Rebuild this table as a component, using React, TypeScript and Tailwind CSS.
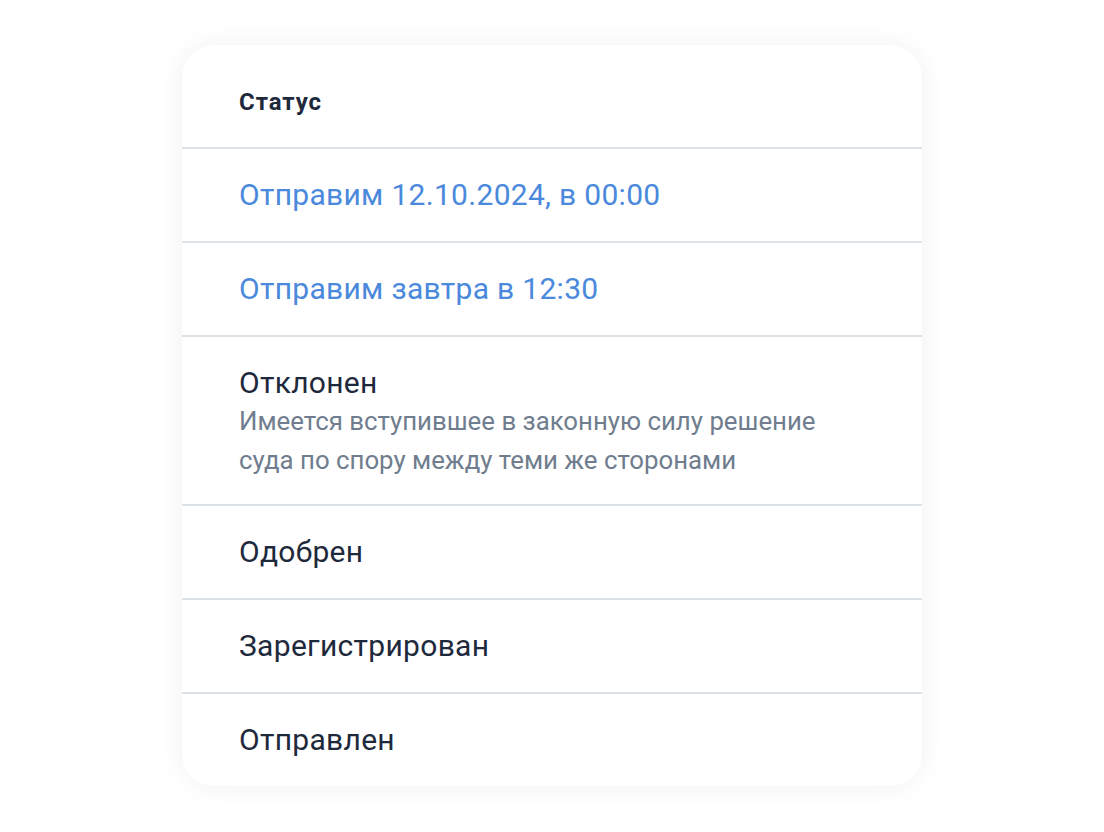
const rows = [
  { title: "Отправим 12.10.2024, в 00:00", tone: "blue" },
  { title: "Отправим завтра в 12:30", tone: "blue" },
  {
    title: "Отклонен",
    tone: "dark",
    note: "Имеется вступившее в законную силу решение суда по спору между теми же сторонами",
  },
  { title: "Одобрен", tone: "dark" },
  { title: "Зарегистрирован", tone: "dark" },
  { title: "Отправлен", tone: "dark" },
];

export default function App() {
  return (
    <main className="min-h-screen w-full bg-white pt-[45px] font-['Roboto',sans-serif]">
      <div className="ml-[182px] w-[740px] overflow-hidden rounded-[32px] bg-white shadow-[0_0_28px_rgba(15,23,42,0.06)]">
        <div className="flex h-[104px] items-center border-b-2 border-[#dde2e7] pl-[57px] pt-[12px]">
          <h2 className="text-[24px] font-bold tracking-[0.04em] text-[#1e293b]">Статус</h2>
        </div>
        {rows.map((row, i) => {
          const last = i === rows.length - 1;
          return (
            <div
              key={row.title}
              className={
                (row.note ? "pt-[27px] pb-[24px] " : last ? "flex h-[92px] items-center " : "flex h-[94px] items-center ") +
                (last ? "" : "border-b-2 border-[#dde2e7] ") +
                "pl-[57px]"
              }
            >
              <div>
                <p className={"text-[30px] leading-[38px] tracking-[0.01em] " + (row.tone === "blue" ? "text-[#4a89dc]" : "text-[#1e293b]")}>
                  {row.title}
                </p>
                {row.note ? (
                  <p className="w-[600px] text-[25.8px] leading-[39px] text-[#6f7d8e]">{row.note}</p>
                ) : null}
              </div>
            </div>
          );
        })}
      </div>
    </main>
  );
}
